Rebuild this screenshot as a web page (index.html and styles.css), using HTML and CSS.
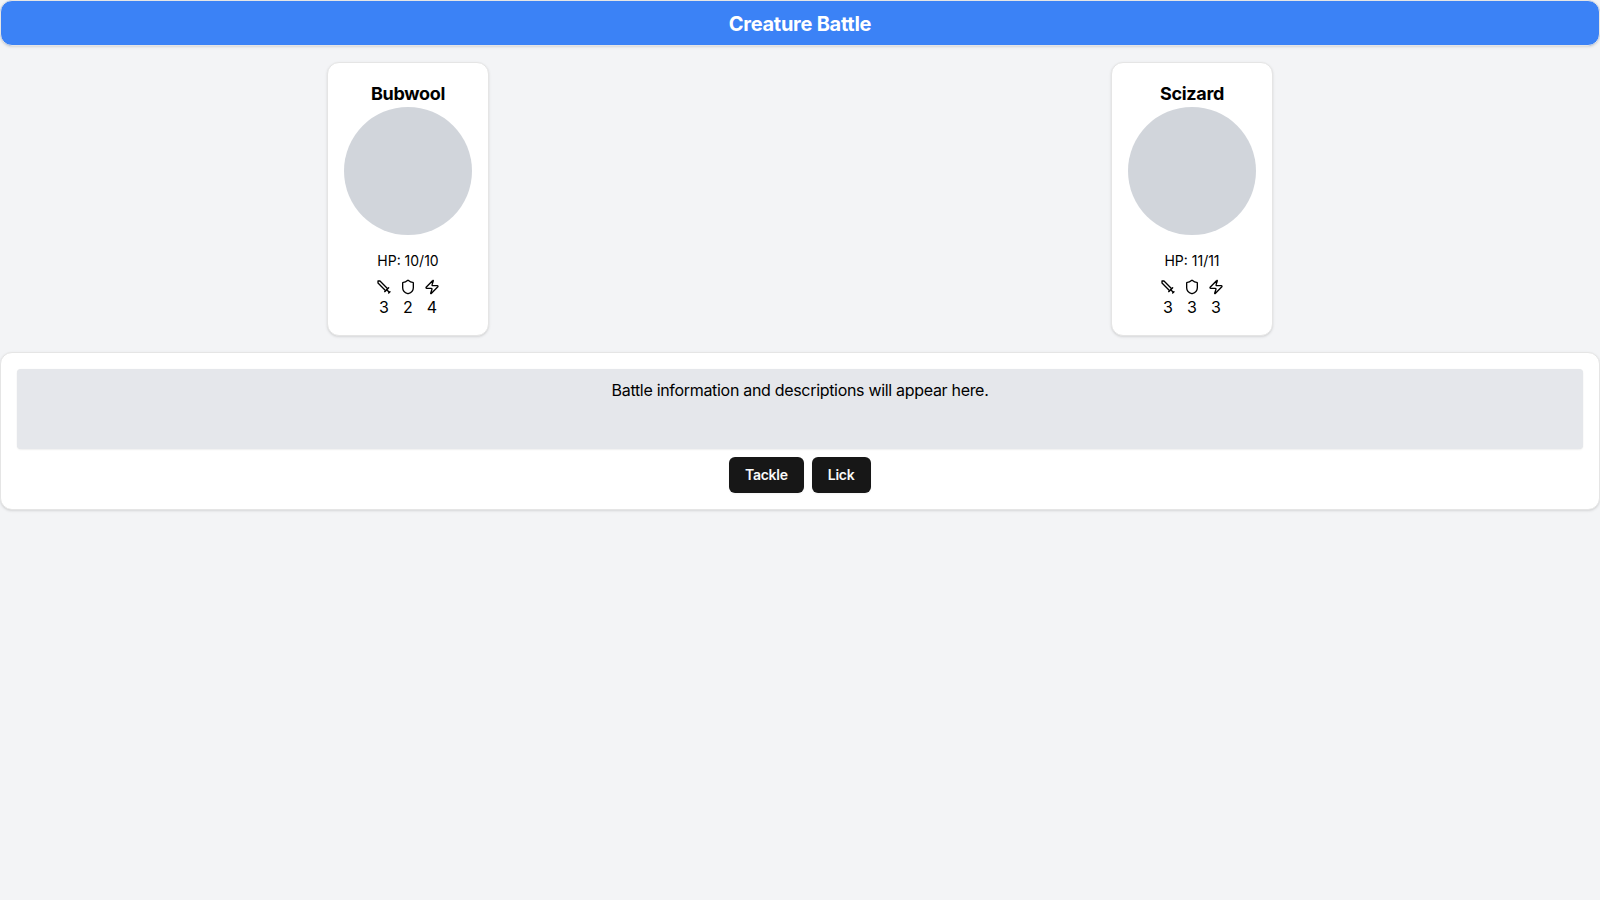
FILE: index.html
```html
<!DOCTYPE html>
<html lang="en">
<head>
<meta charset="utf-8">
<title>Creature Battle</title>
<link rel="stylesheet" href="styles.css">
</head>
<body>
<svg class="defs" aria-hidden="true">
  <symbol id="sword" viewBox="0 0 24 24"><polyline points="14.5 17.5 3 6 3 3 6 3 17.5 14.5"/><line x1="13" x2="19" y1="19" y2="13"/><line x1="16" x2="20" y1="16" y2="20"/><line x1="19" x2="21" y1="21" y2="19"/></symbol>
  <symbol id="shield" viewBox="0 0 24 24"><path d="M20 13c0 5-3.5 7.5-7.66 8.95a1 1 0 0 1-.67-.01C7.5 20.5 4 18 4 13V6a1 1 0 0 1 1-1c2 0 4.500-1.200 6.240-2.720a1.170 1.170 0 0 1 1.520 0C14.510 3.810 17 5 19 5a1 1 0 0 1 1 1z"/></symbol>
  <symbol id="zap" viewBox="0 0 24 24"><path d="M4 14a1 1 0 0 1-.78-1.630l9.900-10.200a.5.5 0 0 1 .860.460l-1.920 6.020A1 1 0 0 0 13 10h7a1 1 0 0 1 .780 1.630l-9.900 10.200a.5.5 0 0 1-.860-.460l1.920-6.020A1 1 0 0 0 11 14z"/></symbol>
</svg>
<main class="page">
  <header class="card header"><h1 class="title">Creature Battle</h1></header>
  <section class="arena">
    <article class="card creature">
      <h2 class="name">Bubwool</h2>
      <div class="avatar"></div>
      <p class="hp">HP: 10/10</p>
      <div class="stats">
        <div class="stat"><svg class="icon"><use href="#sword"/></svg><span>3</span></div>
        <div class="stat"><svg class="icon"><use href="#shield"/></svg><span>2</span></div>
        <div class="stat"><svg class="icon"><use href="#zap"/></svg><span>4</span></div>
      </div>
    </article>
    <article class="card creature">
      <h2 class="name">Scizard</h2>
      <div class="avatar"></div>
      <p class="hp">HP: 11/11</p>
      <div class="stats">
        <div class="stat"><svg class="icon"><use href="#sword"/></svg><span>3</span></div>
        <div class="stat"><svg class="icon"><use href="#shield"/></svg><span>3</span></div>
        <div class="stat"><svg class="icon"><use href="#zap"/></svg><span>3</span></div>
      </div>
    </article>
  </section>
  <section class="card panel">
    <div class="log"><span class="log-text">Battle information and descriptions will appear here.</span></div>
    <div class="actions">
      <button class="button tackle">Tackle</button>
      <button class="button lick">Lick</button>
    </div>
  </section>
</main>
</body>
</html>
```
FILE: styles.css
```css
*, *::before, *::after { box-sizing: border-box; }
body, h1, h2, p { margin: 0; }
body {
  font: 16px/24px Inter, "Liberation Sans", sans-serif;
  color: #000;
  background: #f3f4f6;
}
.defs { display: none; }
.page {
  display: flex;
  flex-direction: column;
  gap: 16px;
  min-height: 100vh;
}
.card {
  border: 1px solid #e5e5e5;
  border-radius: 12px;
  background: #fff;
  box-shadow: 0 1px 3px rgba(0, 0, 0, .1), 0 1px 2px -1px rgba(0, 0, 0, .1);
}
.header {
  padding: 9px 8px 7px;
  background: #3b82f6;
  color: #fff;
  text-align: center;
}
.title { font-size: 20px; line-height: 28px; font-weight: 700; letter-spacing: -.26px; }
.arena {
  display: flex;
  justify-content: space-around;
  padding: 0 16px;
}
.creature {
  display: flex;
  flex-direction: column;
  align-items: center;
  padding: 16px;
}
.name { padding-top: 1px; font-size: 18px; line-height: 27px; font-weight: 700; letter-spacing: -.3px; }
.avatar {
  width: 128px;
  height: 128px;
  border-radius: 50%;
  background: #d1d5db;
}
.hp { margin-top: 16px; font-size: 14px; line-height: 20px; }
.stats { display: flex; gap: 8px; margin-top: 8px; }
.stat {
  display: flex;
  flex-direction: column;
  align-items: center;
  width: 16px;
}
.icon {
  display: block;
  width: 16px;
  height: 16px;
  fill: none;
  stroke: currentColor;
  stroke-width: 2;
  stroke-linecap: round;
  stroke-linejoin: round;
}
.panel { padding: 16px; }
.log {
  height: 80px;
  padding: 9px;
  border-radius: 4px;
  background: #e5e7eb;
  text-align: center;
  letter-spacing: -.31px;
  box-shadow: 0 1px 2px rgba(0, 0, 0, .06), 0 0 1px rgba(0, 0, 0, .08);
}
.actions {
  display: flex;
  justify-content: center;
  gap: 8px;
  margin-top: 8px;
}
.button {
  height: 36px;
  padding: 0;
  border: 0;
  border-radius: 6px;
  background: #171717;
  color: #fafafa;
  font: 600 14px/20px Inter, "Liberation Sans", sans-serif;
  letter-spacing: -.25px;
  box-shadow: 0 1px 2px rgba(0, 0, 0, .05);
}
.tackle { width: 74.3px; }
.lick { width: 59.3px; }
```
